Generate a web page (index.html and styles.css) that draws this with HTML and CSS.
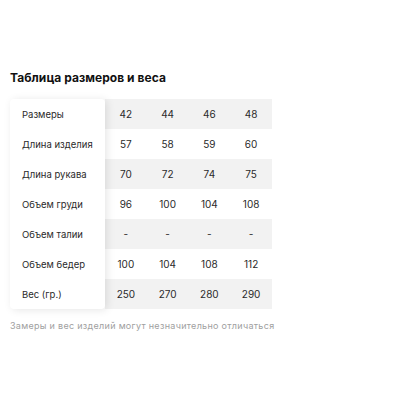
FILE: index.html
```html
<!DOCTYPE html>
<html lang="ru">
<head>
<meta charset="utf-8">
<link rel="stylesheet" href="styles.css">
</head>
<body>
<div class="page">
  <h1 class="title">Таблица размеров и веса</h1>
  <div class="table">
    <div class="labels">
      <div class="cell label">Размеры</div>
      <div class="cell label">Длина изделия</div>
      <div class="cell label">Длина рукава</div>
      <div class="cell label">Объем груди</div>
      <div class="cell label">Объем талии</div>
      <div class="cell label">Объем бедер</div>
      <div class="cell label">Вес (гр.)</div>
    </div>
    <div class="values">
      <div class="row gray"><span>42</span><span>44</span><span>46</span><span>48</span></div>
      <div class="row"><span>57</span><span>58</span><span>59</span><span>60</span></div>
      <div class="row gray"><span>70</span><span>72</span><span>74</span><span>75</span></div>
      <div class="row"><span>96</span><span>100</span><span>104</span><span>108</span></div>
      <div class="row gray"><span>-</span><span>-</span><span>-</span><span>-</span></div>
      <div class="row"><span>100</span><span>104</span><span>108</span><span>112</span></div>
      <div class="row gray"><span>250</span><span>270</span><span>280</span><span>290</span></div>
    </div>
  </div>
  <p class="note">Замеры и вес изделий могут незначительно отличаться</p>
</div>
</body>
</html>
```
FILE: styles.css
```css
html, body {
  margin: 0;
  padding: 0;
  background: #ffffff;
}
body {
  font-family: "Inter", "Noto Sans", sans-serif;
  color: #2a2a2a;
}
.page {
  padding: 69px 0 0 10px;
}
.title {
  margin: 0;
  font-size: 12px;
  font-weight: 700;
  line-height: 17px;
  color: #111;
  letter-spacing: 0.05px;
}
.table {
  display: flex;
  margin-top: 13px;
  width: 262px;
}
.labels {
  width: 95px;
  flex: none;
  background: #fff;
  border-radius: 4px;
  box-shadow: 2px 1px 8px rgba(0, 0, 0, 0.10);
  position: relative;
  z-index: 1;
}
.cell {
  height: 30px;
  display: flex;
  align-items: center;
  padding-left: 12px;
  font-size: 9.5px;
  color: #2a2a2a;
  white-space: nowrap;
}
.values {
  flex: 1;
  display: flex;
  flex-direction: column;
}
.row {
  height: 30px;
  display: grid;
  grid-template-columns: repeat(4, 1fr);
  align-items: center;
  font-size: 10px;
  color: #2a2a2a;
}
.row span {
  text-align: center;
}
.row.gray {
  background: #f2f2f2;
}
.note {
  margin: 11px 0 0 0;
  font-size: 9px;
  color: #a0a0a0;
  letter-spacing: 0.3px;
}
```
